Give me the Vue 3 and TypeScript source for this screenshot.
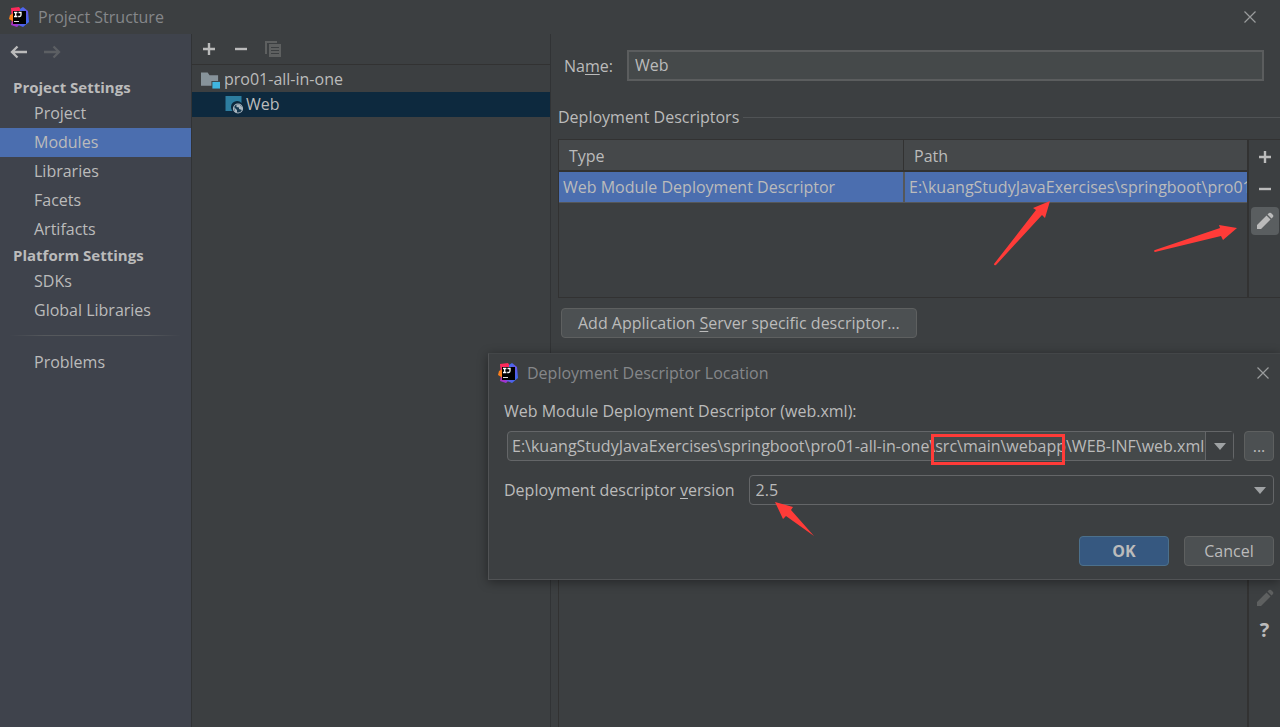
<script setup lang="ts">
import { ref } from 'vue'

interface NavGroup {
  title: string
  items: string[]
}

const groups: NavGroup[] = [
  { title: 'Project Settings', items: ['Project', 'Modules', 'Libraries', 'Facets', 'Artifacts'] },
  { title: 'Platform Settings', items: ['SDKs', 'Global Libraries'] },
]

const active = ref('Modules')
const moduleName = ref('Web')
const descriptorPath = ref('E:\\kuangStudyJavaExercises\\springboot\\pro01-all-in-one\\src\\main\\webapp\\WEB-INF\\web.xml')
const version = ref('2.5')
const versions = ['2.5', '3.0', '3.1', '4.0']
</script>

<template>
  <div class="window">
    <svg width="0" height="0" class="defs" aria-hidden="true">
      <defs>
        <linearGradient id="logo-warm" x1="0" y1="0" x2="0" y2="1">
          <stop offset="0" stop-color="#fe2857" />
          <stop offset="0.45" stop-color="#fb2d6b" />
          <stop offset="1" stop-color="#9135e0" />
        </linearGradient>
        <linearGradient id="logo-cool" x1="0" y1="0" x2="1" y2="1">
          <stop offset="0" stop-color="#1f7cf5" />
          <stop offset="0.5" stop-color="#6a57e8" />
          <stop offset="1" stop-color="#2a6ff0" />
        </linearGradient>
        <symbol id="logo" viewBox="0 0 20 20">
          <path d="M2 1L10 0L14 6V14L8 20L2 18L3 13Z" fill="url(#logo-warm)" />
          <path d="M1 8L5 6V15L0 12Z" fill="#fc801d" />
          <path d="M11 2L14 0L19 4L20 15L14 20L7 17L11 9Z" fill="url(#logo-cool)" />
          <rect x="4" y="4" width="13" height="13" fill="#000" />
          <path d="M5 5.500H8.400M6.700 5.500V9.500M5 9.500H8.400M9.500 5.500H12V8Q12 9.500 10.500 9.500H9.200" fill="none" stroke="#fff" stroke-width="1.300" />
          <rect x="5" y="14" width="5" height="1" fill="#ddd" />
        </symbol>
        <symbol id="plus" viewBox="0 0 16 16">
          <path d="M8 2V14M2 8H14" stroke="currentColor" stroke-width="2.400" />
        </symbol>
        <symbol id="minus" viewBox="0 0 16 16">
          <path d="M2 8H14" stroke="currentColor" stroke-width="2.400" />
        </symbol>
        <symbol id="pencil" viewBox="0 0 18 18">
          <path d="M1 13L10.500 3.500L14.500 7.500L5 17H1Z M11.500 2.500L13 1Q14 0.300 15 1L17 3Q17.700 4 17 5L15.500 6.500Z" fill="currentColor" />
        </symbol>
        <symbol id="close" viewBox="0 0 12 12">
          <path d="M0.500 0.500L11.500 11.500M11.500 0.500L0.500 11.500" stroke="currentColor" stroke-width="1.200" />
        </symbol>
        <symbol id="arrow" viewBox="0 0 18 14">
          <path d="M17 7H2M7.500 1.500L2 7L7.500 12.500" fill="none" stroke="currentColor" stroke-width="2.300" />
        </symbol>
      </defs>
    </svg>

    <header class="titlebar">
      <svg class="logo"><use href="#logo" /></svg>
      <h1>Project Structure</h1>
      <button class="close" aria-label="Close"><svg><use href="#close" /></svg></button>
    </header>

    <div class="body">
      <nav class="sidebar">
        <div class="history">
          <button aria-label="Back"><svg><use href="#arrow" /></svg></button>
          <button class="forward" aria-label="Forward" disabled><svg><use href="#arrow" /></svg></button>
        </div>
        <section v-for="group in groups" :key="group.title">
          <h2>{{ group.title }}</h2>
          <button
            v-for="item in group.items"
            :key="item"
            class="nav-item"
            :class="{ active: active === item }"
            @click="active = item"
          >{{ item }}</button>
        </section>
        <div class="divider"></div>
        <button class="nav-item">Problems</button>
      </nav>

      <aside class="tree">
        <div class="tree-tools">
          <button aria-label="Add"><svg><use href="#plus" /></svg></button>
          <button aria-label="Remove"><svg><use href="#minus" /></svg></button>
          <button class="dim" aria-label="Copy" disabled>
            <svg viewBox="0 0 16 16">
              <path d="M0 0H12V2H2V13H0Z" fill="currentColor" />
              <path fill-rule="evenodd" d="M4 3H16V16H4Z M6 6V7H14V6Z M6 9V10H14V9Z M6 12V13H14V12Z" fill="currentColor" />
            </svg>
          </button>
        </div>
        <ul>
          <li>
            <svg viewBox="0 0 20 18">
              <path d="M0 1H7L9 4H18V10H11V15H0Z" fill="#87939a" />
              <rect x="12" y="11" width="8" height="7" fill="#40b6e0" />
            </svg>
            <span>pro01-all-in-one</span>
          </li>
          <li class="child selected">
            <svg viewBox="0 0 18 18">
              <path d="M0 0H16V7A6 6 0 0 0 7 15H0Z" fill="#2d7d9f" />
              <circle cx="12.500" cy="12.500" r="4.500" fill="#16384f" stroke="#aab6bf" stroke-width="1.200" />
              <path d="M8.500 11L11.500 14V17L9.500 16Z M11 8.500L14 8.500L16.500 11V14L13.500 13V11.500L11 11Z" fill="#aab6bf" />
            </svg>
            <span>Web</span>
          </li>
        </ul>
      </aside>

      <main>
        <div class="name-row">
          <label for="module-name">Na<u>m</u>e:</label>
          <input id="module-name" v-model="moduleName" type="text" />
        </div>
        <h3>Deployment Descriptors</h3>
        <div class="descriptors">
          <div class="table-wrap">
            <table>
              <thead>
                <tr><th>Type</th><th>Path</th></tr>
              </thead>
              <tbody>
                <tr><td>Web Module Deployment Descriptor</td><td>{{ descriptorPath }}</td></tr>
              </tbody>
            </table>
          </div>
          <div class="side-tools">
            <button aria-label="Add descriptor"><svg><use href="#plus" /></svg></button>
            <button aria-label="Remove descriptor"><svg><use href="#minus" /></svg></button>
            <button class="hot" aria-label="Edit descriptor"><svg class="pencil"><use href="#pencil" /></svg></button>
          </div>
        </div>
        <button class="btn add-server">Add Application <u>S</u>erver specific descriptor...</button>
        <div class="resources">
          <div class="resource-list"></div>
          <div class="side-tools lower">
            <button class="dim" aria-label="Edit resource" disabled><svg class="pencil"><use href="#pencil" /></svg></button>
            <button class="help" aria-label="Help">?</button>
          </div>
        </div>
      </main>
    </div>

    <section class="dialog" role="dialog" aria-labelledby="dialog-title">
      <header class="dialog-title">
        <svg class="logo"><use href="#logo" /></svg>
        <h1 id="dialog-title">Deployment Descriptor Location</h1>
        <button class="close" aria-label="Close dialog"><svg><use href="#close" /></svg></button>
      </header>
      <label class="path-label" for="descriptor-path">Web Module Deployment Descriptor (web.xml):</label>
      <div class="path-row">
        <div class="combo">
          <input id="descriptor-path" v-model="descriptorPath" type="text" />
          <button aria-label="Recent paths"><svg viewBox="0 0 12 7"><path d="M0 0H12L6 7Z" fill="currentColor" /></svg></button>
          <span class="highlight"></span>
        </div>
        <button class="btn browse" aria-label="Browse">...</button>
      </div>
      <div class="version-row">
        <label for="descriptor-version">Deployment descriptor <u>v</u>ersion</label>
        <div class="select">
          <select id="descriptor-version" v-model="version">
            <option v-for="v in versions" :key="v">{{ v }}</option>
          </select>
          <svg viewBox="0 0 12 7"><path d="M0 0H12L6 7Z" fill="currentColor" /></svg>
        </div>
      </div>
      <footer>
        <button class="btn primary">OK</button>
        <button class="btn">Cancel</button>
      </footer>
    </section>

    <svg class="marks" width="1280" height="727" viewBox="0 0 1280 727" aria-hidden="true">
      <g fill="#ff3b38">
        <path d="M1050 201L1045 218L1042 215L996 265Q994 266 994 264L1036 210L1033 208Z" />
        <path d="M1237 228L1223 240L1221 236L1155 252Q1153 251 1155 250L1220 228L1219 225Z" />
        <path d="M775 502L793 507L791 510L814 536L786 516L783 519Z" />
      </g>
    </svg>
  </div>
</template>

<style>
body {
  margin: 0;
  background: #3c3f41;
}
</style>

<style scoped>
.window {
  position: relative;
  display: flex;
  flex-direction: column;
  min-height: 100vh;
  overflow: hidden;
  background: #3c3f41;
  color: #bbbbbb;
  font: 16px/20px "Open Sans", "Noto Sans", sans-serif;
}
* {
  box-sizing: border-box;
}
.defs {
  position: absolute;
}
button,
input,
select {
  margin: 0;
  padding: 0;
  border: 0;
  background: none;
  color: inherit;
  font: inherit;
}
u {
  text-underline-offset: 2px;
  text-decoration-skip-ink: none;
}
h1,
h2,
h3 {
  margin: 0;
  font-size: 16px;
  font-weight: 400;
}
.titlebar {
  display: flex;
  align-items: center;
  height: 34px;
  padding: 0 24px 0 9px;
  color: #85878a;
}
.logo {
  width: 20px;
  height: 20px;
  margin-right: 9px;
}
.close {
  display: flex;
  margin-left: auto;
  color: #9a9c9d;
}
.close svg {
  width: 12px;
  height: 12px;
}
.body {
  display: flex;
  flex: 1;
}
.sidebar {
  width: 192px;
  flex: none;
  border-right: 1px solid #313335;
  background: #3f434c;
}
.history {
  display: flex;
  gap: 15px;
  height: 42px;
  padding: 11px 10px;
}
.history button {
  display: flex;
  height: 14px;
}
.history svg {
  width: 18px;
  height: 14px;
}
.forward {
  color: #5c5f63;
  transform: scaleX(-1);
}
.sidebar h2 {
  padding-left: 13px;
  font-weight: 700;
  font-size: 15px;
  line-height: 23px;
}
.nav-item {
  display: block;
  width: 100%;
  height: 29px;
  padding: 0 0 1px 34px;
  text-align: left;
}
.nav-item.active {
  background: #4b6eaf;
}
.divider {
  height: 1px;
  margin: 10px 10px 12px;
  background: linear-gradient(90deg, transparent, #55585c 20%, #55585c 80%, transparent);
}
.tree {
  width: 359px;
  flex: none;
  border-right: 1px solid #313335;
}
.tree-tools {
  display: flex;
  align-items: center;
  gap: 16px;
  height: 31px;
  padding-left: 9px;
  border-bottom: 1px solid #323232;
}
.tree-tools button {
  display: flex;
}
.tree-tools svg,
.side-tools svg {
  width: 16px;
  height: 16px;
}
.dim {
  color: #5e6060;
}
ul {
  margin: 0;
  padding: 2px 0 0;
  list-style: none;
}
li {
  display: flex;
  align-items: center;
  gap: 4px;
  height: 25px;
  padding-left: 9px;
}
li span {
  padding-bottom: 2px;
}
li svg {
  width: 19px;
  height: 18px;
}
.child {
  padding-left: 33px;
  gap: 2px;
}
.selected {
  background: #0d293e;
}
main {
  display: flex;
  flex: 1;
  flex-direction: column;
  min-width: 0;
  padding: 16px 0 0 7px;
}
.name-row {
  display: flex;
  align-items: center;
  gap: 14px;
  padding: 0 16px 0 6px;
}
.name-row input {
  flex: 1;
  min-width: 0;
  height: 31px;
  padding: 0 6px 1px;
  border: 2px solid #5b5d5e;
  background: #45494a;
}
h3 {
  display: flex;
  align-items: center;
  gap: 4px;
  height: 20px;
  margin: 26px 0 12px;
}
h3::after {
  content: "";
  flex: 1;
  height: 1px;
  background: #505355;
}
.descriptors {
  display: flex;
  height: 159px;
  border: solid #323232;
  border-width: 1px 0 1px 1px;
}
.table-wrap {
  flex: 1;
  min-width: 0;
  border-right: 2px solid #323232;
}
table {
  width: 100%;
  table-layout: fixed;
  border-collapse: separate;
  border-spacing: 0;
}
th,
td {
  height: 32px;
  overflow: hidden;
  text-align: left;
  font-weight: 400;
  white-space: nowrap;
}
th {
  padding: 1px 10px 0;
  border-bottom: 2px solid #323232;
  background: #45484a;
}
th + th {
  border-left: 1px solid #323232;
}
td {
  height: 31px;
  padding: 0 0 0 4px;
  border-bottom: 1px solid #555759;
  background: #4b6eaf;
}
td + td {
  padding-left: 4px;
  border-left: 2px solid #555759;
}
.side-tools {
  display: flex;
  flex-direction: column;
  align-items: center;
  gap: 4px;
  width: 31px;
  padding-top: 3px;
}
.side-tools button {
  display: grid;
  place-items: center;
  width: 28px;
  height: 28px;
  border-radius: 4px;
}
.side-tools .hot {
  background: #5a5e60;
}
.side-tools .pencil {
  width: 18px;
  height: 18px;
}
.btn {
  height: 30px;
  border: 1px solid #5e6060;
  border-radius: 4px;
  background: #4c5052;
}
.add-server {
  align-self: flex-start;
  margin: 10px 0 42px 3px;
  padding: 0 16px;
}
.resources {
  display: flex;
  flex: 1;
}
.resource-list {
  flex: 1;
  border: solid #323232;
  border-width: 1px 2px 0 1px;
}
.side-tools.lower {
  padding-top: 204px;
}
.side-tools .help {
  font-size: 20px;
  font-weight: 700;
}
.dialog {
  position: absolute;
  top: 353px;
  right: 0;
  left: 488px;
  padding: 0 6px 13px 15px;
  border: 1px solid #515355;
  border-right: 0;
  border-top-color: #434648;
  background: #3c3f41;
  box-shadow: 0 2px 10px rgba(0, 0, 0, 0.4);
}
.dialog-title {
  display: flex;
  align-items: center;
  height: 38px;
  margin-left: -6px;
  padding-right: 5px;
  color: #85878a;
}
.path-label {
  display: block;
  margin: 9px 0 10px;
}
.path-row {
  display: flex;
  gap: 10px;
  padding-left: 3px;
}
.combo {
  position: relative;
  display: flex;
  flex: 1;
  height: 30px;
  border: 1px solid #646668;
  border-radius: 4px;
  background: #45494a;
}
.combo input {
  flex: 1;
  min-width: 0;
  padding-left: 4px;
}
.combo button {
  display: grid;
  place-items: center;
  width: 28px;
  border-left: 1px solid #646668;
  background: #3c3f41;
}
.combo svg,
.select svg {
  width: 12px;
  height: 7px;
  color: #9fa2a4;
}
.highlight {
  position: absolute;
  top: 2px;
  left: 423px;
  width: 134px;
  height: 31px;
  border: 3px solid #ff3b38;
}
.browse {
  width: 30px;
}
.version-row {
  display: flex;
  align-items: center;
  gap: 14px;
  margin: 14px 0 31px;
}
.select {
  display: grid;
  flex: 1;
  align-items: center;
}
.select > * {
  grid-area: 1 / 1;
}
.select select {
  height: 30px;
  padding: 0 6px;
  appearance: none;
  border: 1px solid #646668;
  border-radius: 4px;
}
.select option {
  background: #3c3f41;
}
.select svg {
  justify-self: end;
  margin-right: 8px;
  pointer-events: none;
}
footer {
  display: flex;
  justify-content: flex-end;
  gap: 15px;
}
footer .btn {
  width: 90px;
}
.primary {
  border-color: #4c708c;
  background: #365880;
  font-weight: 700;
}
.marks {
  position: absolute;
  top: 0;
  left: 0;
  pointer-events: none;
}
</style>
